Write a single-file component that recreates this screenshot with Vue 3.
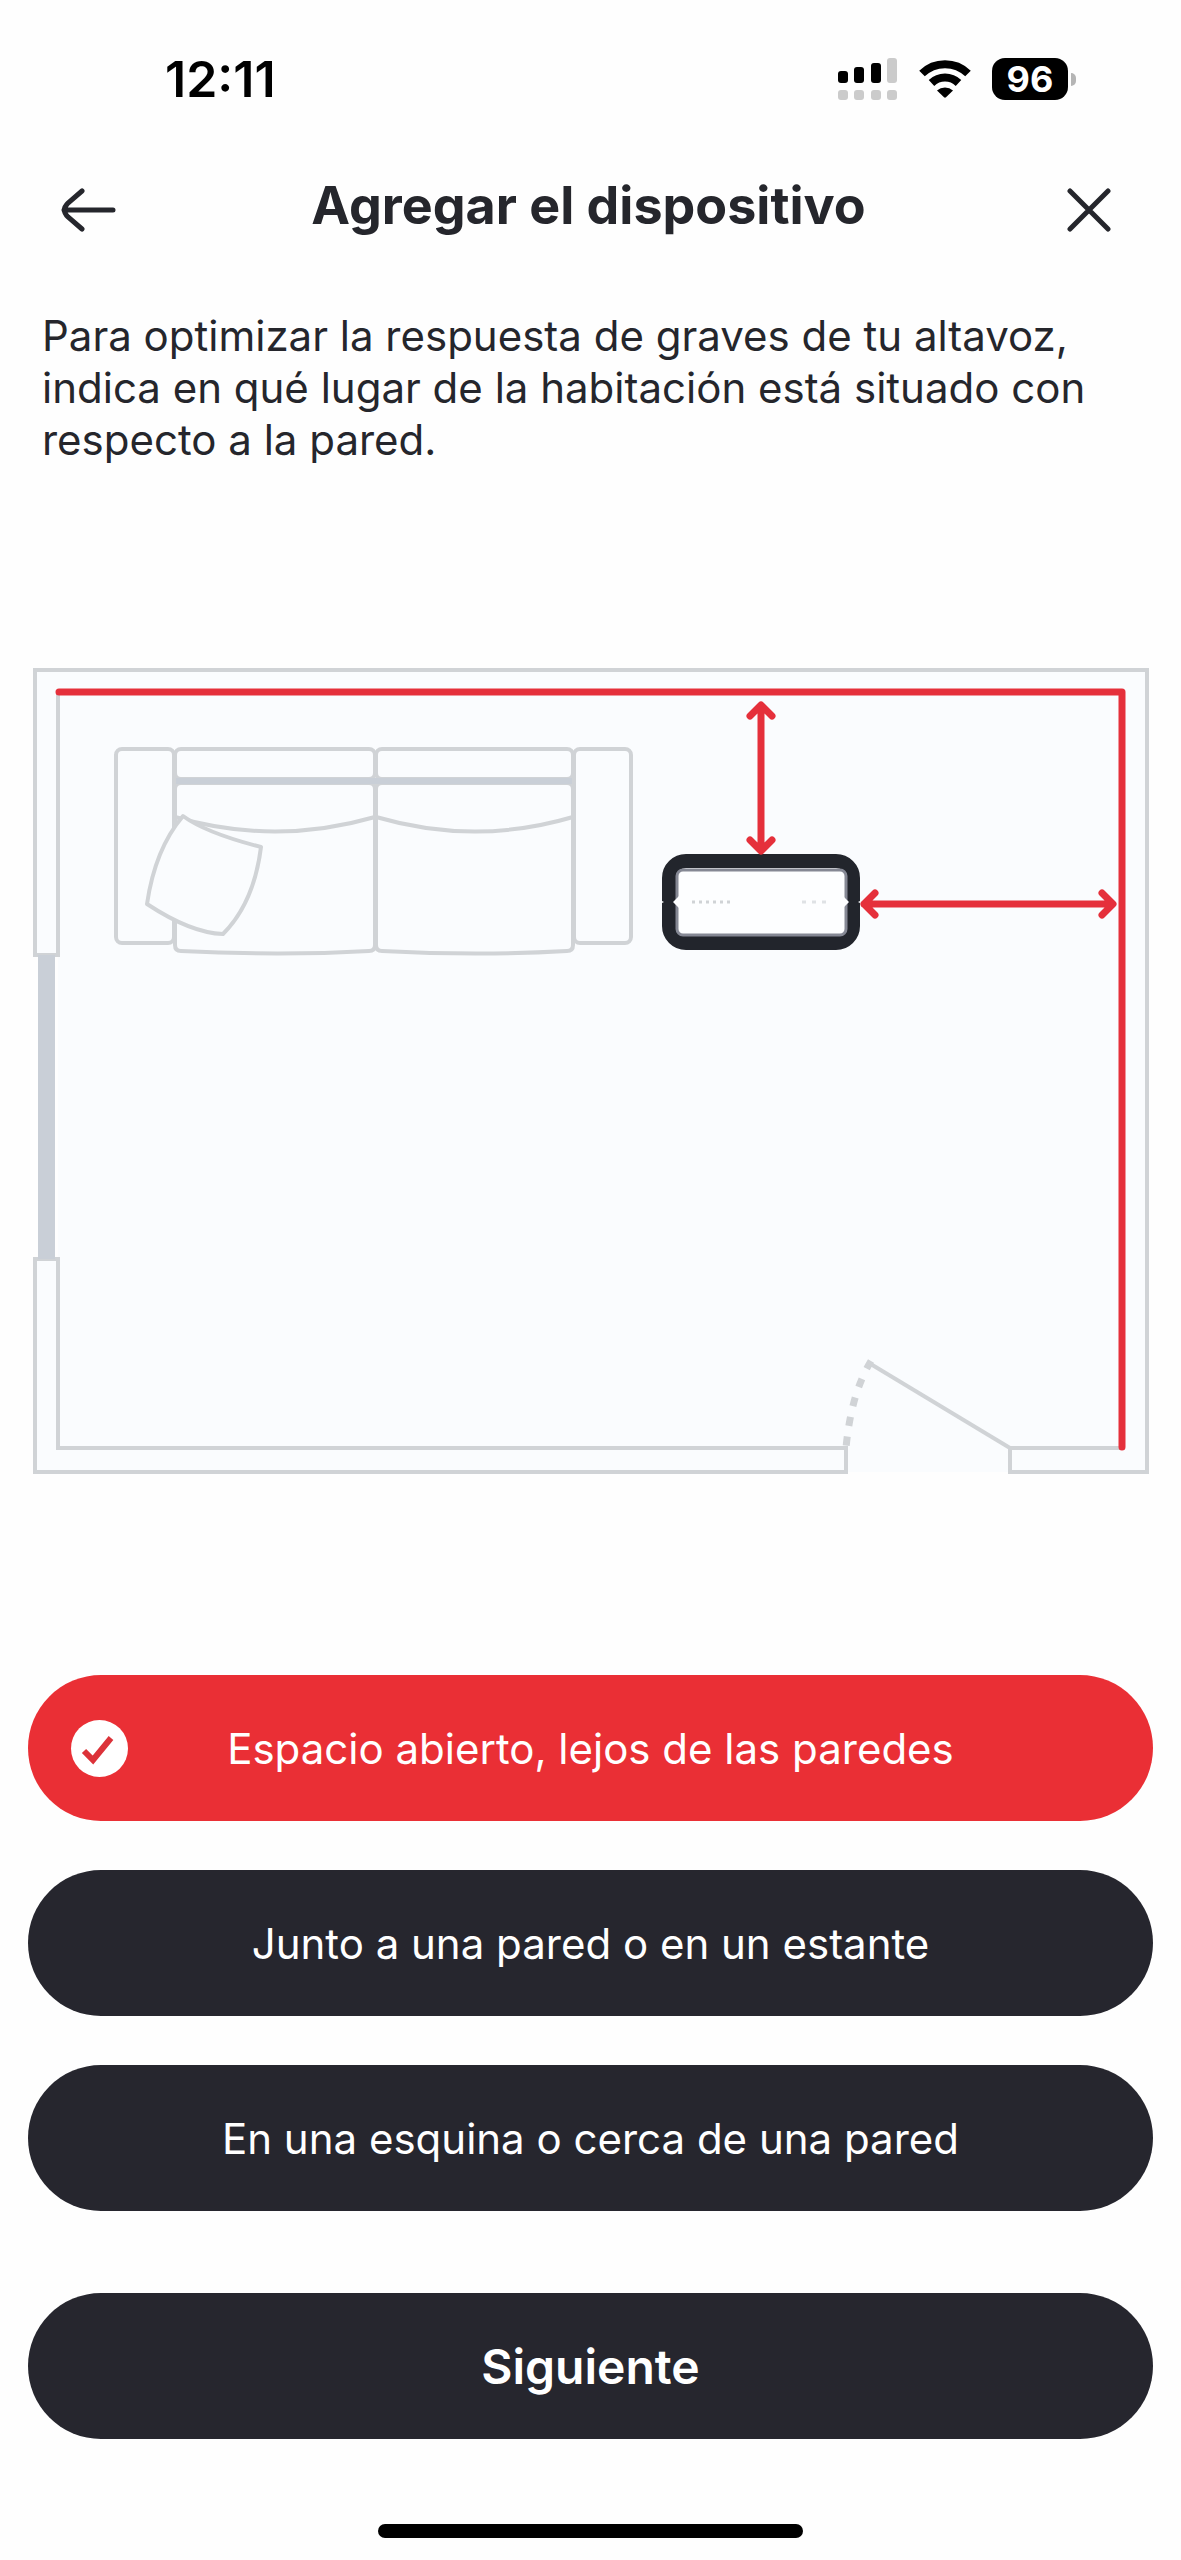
<template>
  <div class="screen">
    <div class="status-bar">
      <span class="time">12:11</span>
      <div class="status-icons">
        <svg class="signal" viewBox="0 0 60 42" aria-hidden="true">
          <rect x="0" y="13" width="10" height="12" rx="3" />
          <rect x="16" y="9" width="10" height="16" rx="3" />
          <rect x="33" y="5" width="10" height="20" rx="3" />
          <rect class="off" x="49" y="0" width="10" height="25" rx="3" />
          <rect v-for="x in [0, 16, 33, 49]" :key="x" class="off" :x="x" y="32" width="10" height="10" rx="3" />
        </svg>
        <svg class="wifi" viewBox="0 0 54 40" aria-hidden="true">
          <path d="M4 14.500a33 33 0 0 1 46 0" />
          <path d="M13.500 24a19.500 19.500 0 0 1 27 0" />
          <path class="dot" d="M19 31.500a12 12 0 0 1 16 0l-7 6.800q-1 .9-2 0z" />
        </svg>
        <div class="battery">
          <span class="battery-level">96</span>
          <span class="battery-tip"></span>
        </div>
      </div>
    </div>

    <header class="header">
      <button class="icon-btn" type="button" aria-label="Atrás">
        <svg viewBox="0 0 56 44" aria-hidden="true">
          <path d="M53 22H4M22 3L8 15q-7 7 0 14l14 12" />
        </svg>
      </button>
      <h1 class="title">Agregar el dispositivo</h1>
      <button class="icon-btn" type="button" aria-label="Cerrar">
        <svg viewBox="0 0 56 44" aria-hidden="true">
          <path d="M9 3l38 38M47 3L9 41" />
        </svg>
      </button>
    </header>

    <main class="content">
      <p class="intro">
        Para optimizar la respuesta de graves de tu altavoz, indica en qué lugar de la habitación está situado con respecto a la pared.
      </p>

      <svg class="room" viewBox="28 664 1125 814" role="img" aria-label="Plano de la habitación">
        <!-- floor -->
        <path class="floor" d="M35 670H1147V1472H35V1259H58V955H35z" />

        <!-- walls, window and door -->
        <g class="line">
          <path d="M1122 1448H1010V1472H1147V670H35V955H58V692" />
          <path d="M58 1448V1259H35V1472H846V1448z" />
          <path d="M1010 1448L869 1363" />
          <path class="swing" d="M871 1361q-20 33-25 87" />
        </g>
        <rect class="shade" x="38" y="955" width="17" height="304" />

        <!-- sofa -->
        <g class="line sofa">
          <rect x="116" y="749" width="58" height="194" rx="6" />
          <rect x="574" y="749" width="57" height="194" rx="6" />
          <rect x="175" y="749" width="200" height="30" rx="6" />
          <rect x="376" y="749" width="197" height="30" rx="6" />
          <path d="M181 783H369q6 0 6 6V945q0 6-6 6-88 5-188 0-6 0-6-6V789q0-6 6-6z" />
          <path d="M382 783H567q6 0 6 6V945q0 6-6 6-88 5-185 0-6 0-6-6V789q0-6 6-6z" />
          <path d="M175 817q100 29 200 0M376 817q99 29 197 0" />
          <path class="cushion" d="M183 816q23 17 78 31-7 56-38 87-32-1-76-30 8-55 36-88z" />
        </g>
        <path class="shade" d="M176 778H572V784H176z" />

        <!-- speaker -->
        <g class="speaker">
          <rect class="body" x="669" y="861" width="184" height="82" rx="17" />
          <rect class="rim" x="677" y="870" width="169" height="65" rx="6" />
          <path class="notch" d="M673 902l6-6v12zM849 902l-6-6v12zM662 901l2 1-2 1zM860 901l-2 1 2 1z" />
          <path class="dots" d="M692 902h40" />
          <path class="dots sparse" d="M802 902h26" />
        </g>

        <!-- distance to walls -->
        <g class="measure">
          <path class="wall" d="M59 692H1122V1447" />
          <path d="M761 706V849M750 716l11-11 11 11M750 840l11 11 11-11" />
          <path d="M864 904H1111M875 893l-11 11 11 11M1102 893l11 11-11 11" />
        </g>
      </svg>

      <div class="options" role="radiogroup" aria-label="Ubicación del altavoz">
        <label
          v-for="option in options"
          :key="option.value"
          class="pill option"
          :class="{ selected: placement === option.value }"
        >
          <input v-model="placement" class="radio" type="radio" name="placement" :value="option.value" />
          <svg v-if="placement === option.value" class="check" viewBox="0 0 57 57" aria-hidden="true">
            <path d="M13 31l9 9 18-22" />
          </svg>
          <span class="option-text">{{ option.label }}</span>
        </label>
      </div>

      <button class="pill next" type="button">Siguiente</button>
    </main>

    <div class="home-indicator"></div>
  </div>
</template>

<script setup>
import { ref } from 'vue';

const placement = ref('open');

const options = [
  { value: 'open', label: 'Espacio abierto, lejos de las paredes' },
  { value: 'wall', label: 'Junto a una pared o en un estante' },
  { value: 'corner', label: 'En una esquina o cerca de una pared' }
];
</script>

<style>
body {
  margin: 0;
  background: #fefefe;
}
</style>

<style scoped>
.screen {
  display: flex;
  flex-direction: column;
  min-height: 100vh;
  box-sizing: border-box;
  padding-bottom: 22px;
  color: #25262c;
  font-family: Inter, "Liberation Sans", sans-serif;
  font-size: 42px;
}

.status-bar {
  display: flex;
  align-items: center;
  justify-content: space-between;
  height: 158px;
  padding: 0 105px 0 165px;
  color: #000;
}

.time {
  font-size: 50px;
  font-weight: 600;
}

.status-icons {
  display: flex;
  align-items: center;
  gap: 20px;
}

.signal {
  width: 60px;
  height: 42px;
}

.off {
  fill: #cbcbcb;
}

.wifi {
  width: 54px;
  height: 40px;
  fill: none;
  stroke: #000;
  stroke-width: 8;
}

.wifi .dot {
  fill: #000;
  stroke: none;
}

.battery {
  display: flex;
  align-items: center;
  gap: 3px;
}

.battery-level {
  width: 76px;
  border-radius: 13px;
  background: #000;
  color: #fff;
  font-size: 36px;
  font-weight: 700;
  line-height: 42px;
  text-align: center;
}

.battery-tip {
  width: 5px;
  height: 13px;
  border-radius: 0 6px 6px 0;
  background: #b5b5b5;
}

.header {
  display: flex;
  align-items: center;
  justify-content: space-between;
  height: 104px;
  padding: 0 64px 0 60px;
}

.icon-btn {
  padding: 0;
  border: 0;
  background: none;
  cursor: pointer;
}

.icon-btn svg {
  display: block;
  width: 56px;
  height: 44px;
  fill: none;
  stroke: #25262c;
  stroke-width: 5;
  stroke-linecap: round;
}

.title {
  margin: 0;
  padding-bottom: 8px;
  font-size: 52px;
  font-weight: 700;
  line-height: 64px;
}

.content {
  display: flex;
  flex-direction: column;
  padding: 0 28px;
}

.intro {
  margin: 48px 14px 198px;
  line-height: 52px;
}

.room {
  display: block;
  width: 100%;
  height: auto;
}

.floor {
  fill: #fafcfe;
}

.line {
  fill: none;
  stroke: #d0d3d6;
  stroke-width: 4;
}

.sofa {
  stroke-linejoin: round;
}

.swing {
  stroke-width: 7;
  stroke-dasharray: 9 11;
}

.cushion {
  fill: #fafcfe;
}

.shade {
  fill: #c9cfd7;
}

.body {
  fill: none;
  stroke: #22252c;
  stroke-width: 14;
}

.rim {
  fill: #fdfeff;
  stroke: #858894;
  stroke-width: 3;
}

.notch {
  fill: #fdfeff;
}

.dots {
  stroke: #d0d3d6;
  stroke-width: 3;
  stroke-dasharray: 3 4;
}

.dots.sparse {
  stroke: #dfe2e5;
  stroke-dasharray: 4 6;
}

.measure {
  fill: none;
  stroke: #e5303b;
  stroke-width: 7;
  stroke-linecap: round;
  stroke-linejoin: round;
}

.options {
  display: flex;
  flex-direction: column;
  gap: 49px;
  margin-top: 197px;
}

.pill {
  height: 146px;
  border: 0;
  border-radius: 73px;
  background: #26262e;
  color: #fff;
  cursor: pointer;
}

.option {
  display: grid;
  grid-template-columns: 57px 1fr 57px;
  align-items: center;
  padding: 0 43px;
}

.option.selected {
  background: #ea2f35;
}

.radio {
  grid-area: 1 / 1;
  width: 57px;
  height: 57px;
  margin: 0;
  border-radius: 50%;
  appearance: none;
}

.radio:checked {
  background: #fff;
}

.check {
  grid-area: 1 / 1;
  width: 57px;
  height: 57px;
  fill: none;
  stroke: #dc3239;
  stroke-width: 6;
}

.option-text {
  grid-area: 1 / 2;
  text-align: center;
}

.next {
  margin-top: 82px;
  font-family: inherit;
  font-size: 48px;
  font-weight: 600;
}

.home-indicator {
  align-self: center;
  width: 36%;
  height: 14px;
  margin-top: auto;
  border-radius: 7px;
  background: #000;
}
</style>
